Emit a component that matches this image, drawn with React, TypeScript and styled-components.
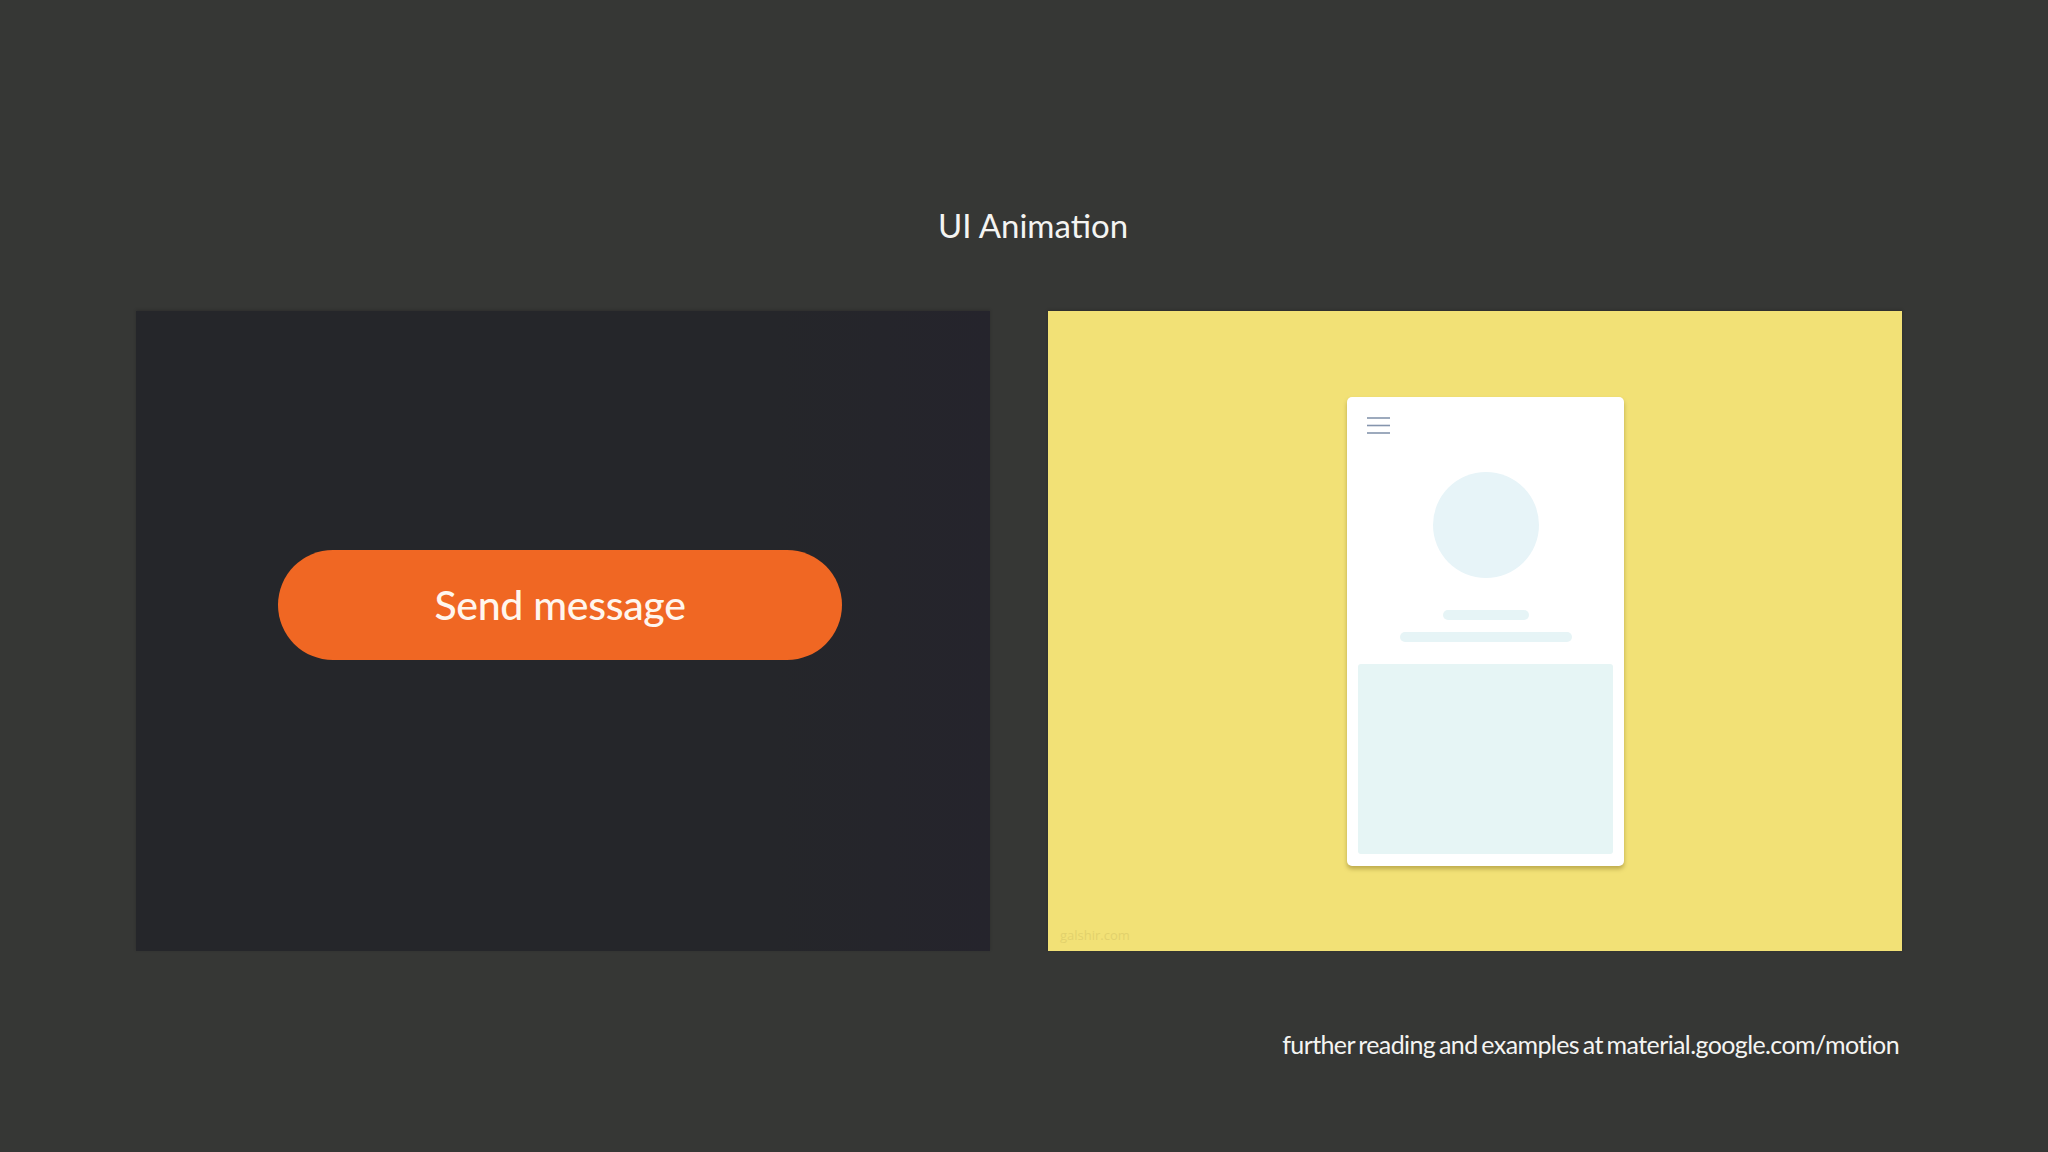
import styled, { createGlobalStyle } from "styled-components";

const Global = createGlobalStyle`
  html, body {
    margin: 0;
    padding: 0;
    background: #363735;
  }
`;

const Page = styled.div`
  width: 2048px;
  height: 1152px;
  background: #363735;
  display: flex;
  flex-direction: column;
  overflow: hidden;
  font-family: Lato, "Open Sans", sans-serif;
`;

const Title = styled.h1`
  margin: 203px 0 0 18px;
  text-align: center;
  font-size: 33px;
  line-height: 44px;
  font-weight: 400;
  color: #f4f4f2;
`;

const Row = styled.div`
  display: flex;
  gap: 58px;
  padding-left: 136px;
  margin-top: 64px;
`;

const Panel = styled.div<{ $bg: string }>`
  position: relative;
  width: 854px;
  height: 640px;
  background: ${(p) => p.$bg};
  box-shadow: 0 -1px 3px rgba(0, 0, 0, 0.18);
`;

const DarkPanel = styled(Panel)`
  display: flex;
  align-items: center;
  justify-content: center;
  background: linear-gradient(90deg, #25262a 0%, #25262a 75%, #25242c 100%);
`;

const SendButton = styled.div`
  width: 564px;
  height: 110px;
  margin: 0 6px 52px 0;
  border-radius: 55px;
  background: #f06723;
  display: flex;
  align-items: center;
  justify-content: center;
  color: #fff6ee;
  font-size: 41px;
  font-weight: 500;
  letter-spacing: -0.3px;
  padding-bottom: 2px;
  box-sizing: border-box;
`;

const YellowPanel = styled(Panel)`
  padding: 86px 0 0 299px;
  box-sizing: border-box;
`;

const Card = styled.div`
  width: 277px;
  height: 469px;
  box-sizing: border-box;
  background: #ffffff;
  border-radius: 5px;
  box-shadow: 0 3px 4px rgba(90, 70, 0, 0.35);
  padding: 20px 11px 12px;
  display: flex;
  flex-direction: column;
  align-items: center;
`;

const Burger = styled.svg`
  align-self: flex-start;
  margin-left: 9px;
`;

const Avatar = styled.div`
  width: 106px;
  height: 106px;
  border-radius: 50%;
  background: #e7f4f8;
  margin-top: 38px;
`;

const Line = styled.div<{ $w: number; $mt: number }>`
  width: ${(p) => p.$w}px;
  height: 10px;
  border-radius: 5px;
  background: #e6f4f6;
  margin-top: ${(p) => p.$mt}px;
`;

const Block = styled.div`
  width: 255px;
  height: 190px;
  margin-top: 22px;
  border-radius: 3px;
  background: #e6f5f5;
`;

const Watermark = styled.span`
  position: absolute;
  left: 12px;
  bottom: 7px;
  font-family: "Open Sans", sans-serif;
  font-size: 13px;
  color: #e2d16c;
`;

const Footer = styled.div`
  margin-top: 77px;
  width: 1899px;
  text-align: right;
  font-size: 25px;
  line-height: 32px;
  letter-spacing: -0.6px;
  word-spacing: -2px;
  color: #f4f4f2;
`;

export default function App() {
  return (
    <Page>
      <Global />
      <Title>UI Animation</Title>
      <Row>
        <DarkPanel $bg="#25262a">
          <SendButton>Send message</SendButton>
        </DarkPanel>
        <YellowPanel $bg="#f2e176">
          <Card>
            <Burger width="23" height="17" viewBox="0 0 23 17">
              <g stroke="#8595ad" strokeWidth="1.6">
                <line x1="0" y1="1" x2="23" y2="1" />
                <line x1="0" y1="8.5" x2="23" y2="8.5" />
                <line x1="0" y1="16" x2="23" y2="16" />
              </g>
            </Burger>
            <Avatar />
            <Line $w={86} $mt={32} />
            <Line $w={172} $mt={12} />
            <Block />
          </Card>
          <Watermark>galshir.com</Watermark>
        </YellowPanel>
      </Row>
      <Footer>further reading and examples at material.google.com/motion</Footer>
    </Page>
  );
}
